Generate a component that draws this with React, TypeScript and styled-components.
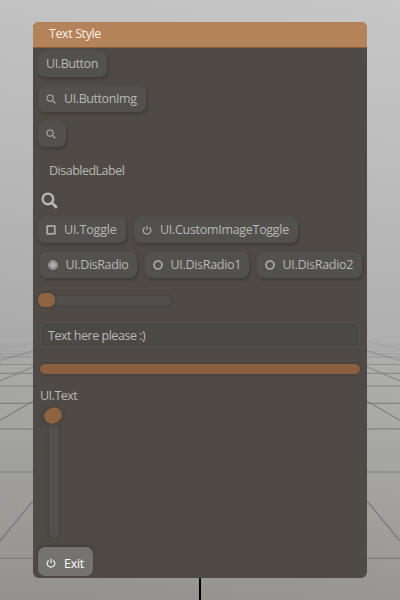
import React from "react";
import styled, { createGlobalStyle } from "styled-components";

const GlobalStyle = createGlobalStyle`
  *, *::before, *::after { box-sizing: border-box; }
  html, body { margin: 0; padding: 0; }
  body { font-family: "Open Sans", "Noto Sans", sans-serif; letter-spacing: -0.3px; }
`;

const Scene = styled.main`
  position: relative;
  width: 400px;
  height: 600px;
  padding: 22px 33px;
  overflow: hidden;
  background:
    linear-gradient(90deg, rgba(0, 0, 0, 0.015), rgba(255, 255, 255, 0.03)),
    linear-gradient(180deg, #c5c5c5 0, #bcbcbc 25%, #adadad 57%, #a8a8a6 68%, #9d9c99 88%, #949390 100%);
`;

const Floor = styled.svg`
  position: absolute;
  inset: 0;
`;

const Window = styled.section`
  position: relative;
  display: flex;
  flex-direction: column;
  width: 334px;
  height: 556px;
  border-radius: 6px;
  overflow: hidden;
  background: #4f4a45;
`;

const TitleBar = styled.header`
  flex: none;
  height: 26px;
  padding-left: 16px;
  border-bottom: 1px solid #895e3c;
  background: #b5835a;
  color: #f6efe8;
  font-size: 12.5px;
  line-height: 24px;
  letter-spacing: -0.4px;
`;

const Content = styled.div`
  flex: 1;
  display: flex;
  flex-direction: column;
  align-items: flex-start;
  padding: 3px 5px 2px;
  color: #b9b7b5;
  font-size: 12.5px;
`;

const Row = styled.div<{ $inset?: number }>`
  display: flex;
  gap: 8px;
  margin: 0 0 9px ${(p) => p.$inset ?? 0}px;
`;

const Button = styled.button<{ $width: number; $lit?: boolean; $tracking?: number }>`
  display: flex;
  align-items: center;
  flex: none;
  width: ${(p) => p.$width}px;
  height: ${(p) => (p.$lit ? 29 : 26)}px;
  padding: ${(p) => (p.$lit ? "3px 0 0 8px" : "0 0 1px 8px")};
  border: 0;
  border-radius: 7px;
  background: ${(p) => (p.$lit ? "#757370" : "#52514e")};
  box-shadow: ${(p) => (p.$lit ? "0 -1px 3px #3b3734" : "1px 2px 3px #3f3b38")};
  color: ${(p) => (p.$lit ? "#fbfbfb" : "inherit")};
  font: inherit;
  letter-spacing: ${(p) => p.$tracking ?? -0.3}px;
  white-space: nowrap;

  svg { flex: none; margin-right: 8px; opacity: 0.9; }
`;

const RadioButton = styled(Button)`
  svg { margin-right: 7.5px; }
`;

const Label = styled.div<{ $left: number; $top: number }>`
  height: 18px;
  margin: ${(p) => p.$top}px 0 0 ${(p) => p.$left}px;
  line-height: 18px;
  letter-spacing: -0.5px;
`;

const LooseIcon = styled.div`
  height: 18px;
  margin: 12px 0 7px 3px;
  line-height: 0;
`;

const Slider = styled.div`
  display: flex;
  align-items: center;
  width: 133px;
  height: 14px;
  margin-top: 6px;
`;

const SliderKnob = styled.div`
  position: relative;
  z-index: 1;
  width: 17px;
  height: 14px;
  border-radius: 6px;
  background: #8d6342;
  box-shadow: 0 0 3px #3d3835;
`;

const SliderTrack = styled.div`
  flex: 1;
  height: 9px;
  margin-left: -9px;
  border-radius: 5px;
  background: #52504e;
  box-shadow: 0 0 3px #403c39;
`;

const TextField = styled.input`
  width: 320px;
  height: 26px;
  margin: 15px 0 0 2px;
  padding: 0 7px 0;
  border: 1px solid #555350;
  border-radius: 6px;
  outline: 0;
  background: #4a4945;
  color: #b9b7b5;
  font: inherit;
  letter-spacing: -0.47px;
`;

const Progress = styled.div`
  width: 320px;
  height: 10px;
  margin: 16px 0 0 2px;
  border-radius: 5px;
  background: #8a6041;
  box-shadow: 0 0 3px #3f3936;
`;

const VerticalSlider = styled.div`
  display: flex;
  flex-direction: column;
  align-items: center;
  width: 20px;
  height: 130px;
  margin: 3px 0 9px 6px;
`;

const RoundKnob = styled.div`
  position: relative;
  z-index: 1;
  flex: none;
  width: 18px;
  height: 15px;
  margin-right: 2px;
  border-radius: 8px;
  background: #8d6342;
  box-shadow: 0 0 4px #3b3734;
  transform: rotate(-25deg);
`;

const VerticalTrack = styled.div`
  flex: 1;
  width: 10px;
  margin-top: -7px;
  border-radius: 5px;
  background: #52504e;
  box-shadow: 0 0 3px #403c39;
`;

const Search = ({ size = 10 }: { size?: number }) => (
  <svg width={size} height={size} viewBox="0 0 16 16" fill="none" stroke="currentColor" strokeWidth={size > 12 ? 2.2 : 1.7}>
    <circle cx="6.5" cy="6.5" r="5" />
    <path d="m10.2 10.2 4.7 4.7" strokeWidth={size > 12 ? 2.6 : 2} />
  </svg>
);

const Power = () => (
  <svg width="10" height="10" viewBox="0 0 10 10" fill="none" stroke="currentColor" strokeWidth="1.2">
    <path d="M2.8 2.4a3.9 3.7 0 1 0 4.4 0M5 .8v4.2" />
  </svg>
);

const Square = () => (
  <svg width="10" height="10" viewBox="0 0 10 10" fill="none" stroke="currentColor" strokeWidth="1.7">
    <rect x="1.2" y="1" width="7.6" height="7.8" />
  </svg>
);

const Radio = ({ on = false }: { on?: boolean }) => (
  <svg width="10" height="10" viewBox="0 0 10 10" fill="none" stroke="currentColor">
    <circle cx="5" cy="5" r={on ? 4.3 : 4} strokeWidth={on ? 1 : 1.7} fill={on ? "#858381" : "none"} />
    {on && <circle cx="5" cy="5" r="2.8" fill="currentColor" stroke="none" />}
  </svg>
);

const horizontals = [351, 354, 357, 364.5, 373.3, 386, 403.3, 428.8, 472, 558.3];
const leftRays = [
  [351, 360.5],
  [367, 381],
  [401, 420.5],
  [501, 541],
];

const Grid = () => (
  <Floor width="400" height="600" viewBox="0 0 400 600" stroke="#787876" fill="none">
    {horizontals.map((y, i) => (
      <path key={y} d={`M0 ${y}H400`} strokeWidth="1.2" opacity={Math.min(0.8, 0.2 + i * 0.12)} />
    ))}
    {leftRays.map(([near, far], i) => (
      <path key={near} d={`M0 ${far}L33 ${near}M400 ${far}L367 ${near}`} strokeWidth="1.2" opacity={0.55 + i * 0.14} />
    ))}
    <path d="M0 349.5L33 343M400 349.5L367 341M0 347H33M367 347H400M0 344H33M367 344H400" opacity=".14" />
    <path d="M200 570V600" stroke="#000" strokeWidth="2" />
  </Floor>
);

export default function App() {
  return (
    <>
      <GlobalStyle />
      <Scene>
        <Grid />
        <Window>
          <TitleBar>Text Style</TitleBar>
          <Content>
            <Row><Button $width={69} $tracking={-0.42}>UI.Button</Button></Row>
            <Row><Button $width={108} $tracking={-0.42}><Search />UI.ButtonImg</Button></Row>
            <Row><Button $width={28} aria-label="Search"><Search /></Button></Row>
            <Label $left={11} $top={6}>DisabledLabel</Label>
            <LooseIcon><Search size={17} /></LooseIcon>
            <Row>
              <Button $width={88} $tracking={-0.15}><Square />UI.Toggle</Button>
              <Button $width={164}><Power />UI.CustomImageToggle</Button>
            </Row>
            <Row $inset={2}>
              <RadioButton $width={97} $tracking={-0.38}><Radio on />UI.DisRadio</RadioButton>
              <RadioButton $width={104}><Radio />UI.DisRadio1</RadioButton>
              <RadioButton $width={105}><Radio />UI.DisRadio2</RadioButton>
            </Row>
            <Slider><SliderKnob /><SliderTrack /></Slider>
            <TextField defaultValue="Text here please :)" />
            <Progress />
            <Label $left={2} $top={13}>UI.Text</Label>
            <VerticalSlider><RoundKnob /><VerticalTrack /></VerticalSlider>
            <Button $width={55} $lit><Power />Exit</Button>
          </Content>
        </Window>
      </Scene>
    </>
  );
}
